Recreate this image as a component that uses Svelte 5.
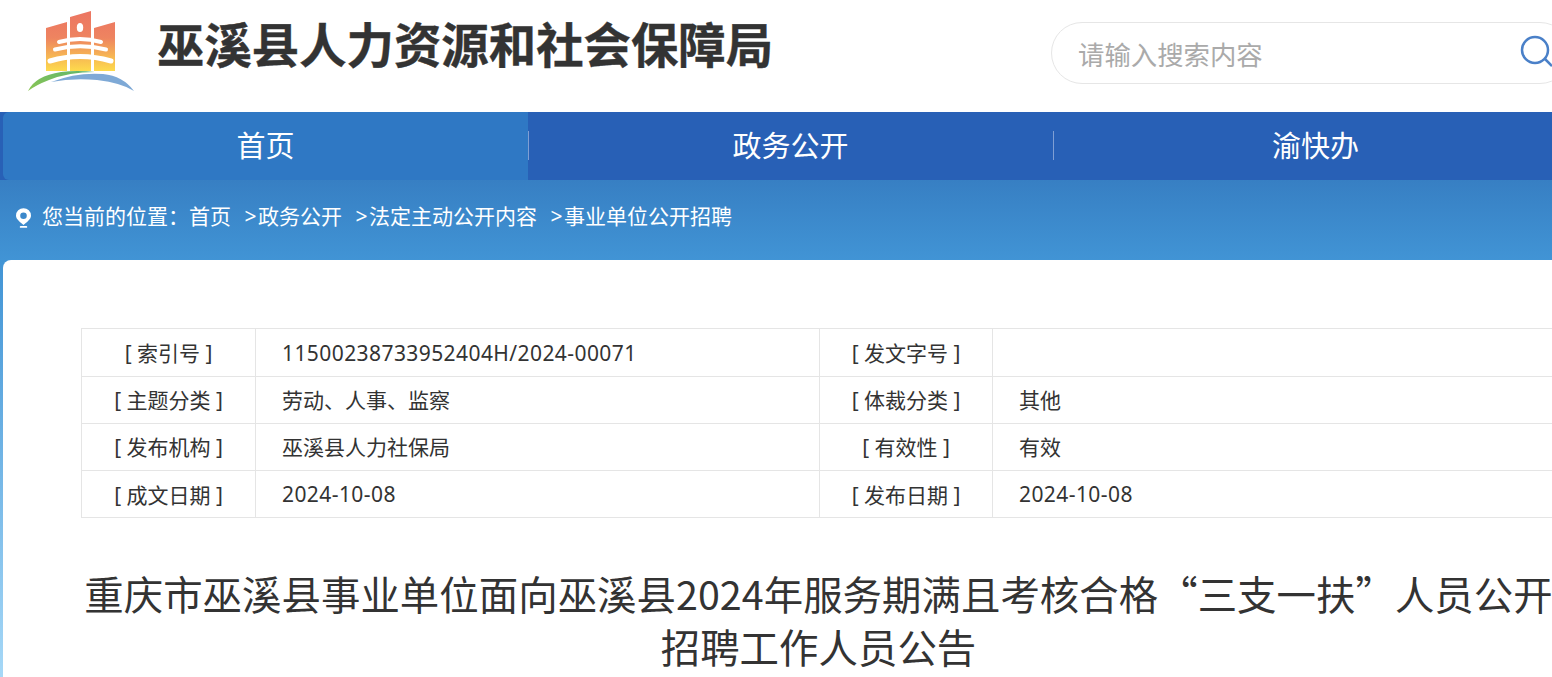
<script>
  const nav = ["首页", "政务公开", "渝快办"];
  const crumbs = ["政务公开", "法定主动公开内容", "事业单位公开招聘"];
  const rows = [
    ["索引号", "11500238733952404H/2024-00071", "发文字号", ""],
    ["主题分类", "劳动、人事、监察", "体裁分类", "其他"],
    ["发布机构", "巫溪县人力社保局", "有效性", "有效"],
    ["成文日期", "2024-10-08", "发布日期", "2024-10-08"]
  ];
  const isLatin = (s) => /^[\x00-\x7f]+$/.test(s);
</script>

<div class="page">
  <header class="top">
    <svg class="logo" width="108" height="82" viewBox="0 0 108 82">
      <defs>
        <linearGradient id="sky" gradientUnits="userSpaceOnUse" x1="0" y1="0" x2="0" y2="60">
          <stop offset="0" stop-color="#ec7562" />
          <stop offset="0.45" stop-color="#ee8460" />
          <stop offset="0.75" stop-color="#f6b554" />
          <stop offset="1" stop-color="#fedb4c" />
        </linearGradient>
        <linearGradient id="grass" x1="0" y1="1" x2="1" y2="0">
          <stop offset="0" stop-color="#8cc654" />
          <stop offset="1" stop-color="#5fb56c" />
        </linearGradient>
      </defs>
      <path d="M19 17 L40 11 V60 H19 Z M43 6 L64 0 V60 H43 Z M67 17 L88 11 V60 H67 Z" fill="url(#sky)" />
      <ellipse cx="53" cy="16.500" rx="3.200" ry="4.500" fill="#fff" />
      <g fill="none" stroke="#fff" stroke-linecap="round">
        <path d="M32 31 Q53 25 74 31" stroke-width="4" />
        <path d="M28 38.500 Q53 32 79 38.500" stroke-width="4" />
        <path d="M23 50 Q53 41 84 50" stroke-width="5" />
      </g>
      <path d="M1 80 Q8 65 34 61 Q50 59 68 61 Q42 61 22 69 Q9 74 1 80 Z" fill="url(#grass)" />
      <path d="M24 71 Q50 61 76 63 Q96 65 107 80 Q95 72 70 69 Q45 67 24 71 Z" fill="#7ea9d6" />
    </svg>
    <h1>巫溪县人力资源和社会保障局</h1>
    <div class="search">
      <input type="text" placeholder="请输入搜索内容" />
      <svg width="36" height="36" viewBox="0 0 36 36">
        <circle cx="16" cy="16" r="13" fill="none" stroke="#4a80c8" stroke-width="2.500" />
        <path d="M26 25 L33 32" fill="none" stroke="#4a80c8" stroke-width="2.500" />
      </svg>
    </div>
  </header>

  <nav class="nav">
    {#each nav as item, i}
      <a class="nav-item" class:active={i === 0} href="#top">{item}</a>
    {/each}
  </nav>

  <div class="body-bg">
    <div class="crumbs">
      <svg width="15" height="20" viewBox="0 0 16 21">
        <path fill-rule="evenodd" d="M8 0 A8 8 0 0 1 16 8 C16 12 11 15 8 18 C5 15 0 12 0 8 A8 8 0 0 1 8 0 Z M8 4.500 A3.500 3.500 0 1 0 8 11.500 A3.500 3.500 0 1 0 8 4.500 Z" fill="#fff" />
        <rect x="4" y="19" width="8" height="2" rx="1" fill="#fff" />
      </svg>
      <span>您当前的位置：</span>
      <span>首页</span>
      {#each crumbs as c}
        <span class="crumb"><span class="arrow">&gt;</span>{c}</span>
      {/each}
    </div>

    <main class="card">
      <table>
        <colgroup>
          <col class="c1" />
          <col class="c2" />
          <col class="c3" />
          <col class="c4" />
        </colgroup>
        <tbody>
          {#each rows as r}
            <tr>
              <th>[ {r[0]} ]</th>
              <td class:latin={isLatin(r[1])}>{r[1]}</td>
              <th>[ {r[2]} ]</th>
              <td class:latin={isLatin(r[3])}>{r[3]}</td>
            </tr>
          {/each}
        </tbody>
      </table>
      <h2>重庆市巫溪县事业单位面向巫溪县2024年服务期满且考核合格“三支一扶”人员公开招聘工作人员公告</h2>
    </main>
  </div>
</div>

<style>
  :global(html),
  :global(body) {
    margin: 0;
    overflow: hidden;
    height: 100%;
    background: #fff;
  }

  .page {
    width: 1552px;
    height: 677px;
    overflow: hidden;
    font-family: "Noto Sans", "Noto Sans CJK SC", sans-serif;
    color: #333;
  }

  .top {
    height: 112px;
    display: flex;
    align-items: center;
    width: 1640px;
    box-sizing: border-box;
    padding-left: 27px;
  }

  .logo {
    flex: none;
    margin-top: -8px;
  }

  h1 {
    margin: -22px 0 0 22px;
    font-size: 47.400px;
    line-height: 60px;
    font-weight: 700;
    color: #333;
    white-space: nowrap;
    width: 894px;
    -webkit-text-stroke: 0.4px #333;
  }

  .search {
    flex: none;
    width: 520px;
    height: 62px;
    box-sizing: border-box;
    border: 1px solid #e6e6e6;
    border-radius: 31px;
    margin-top: -6px;
    padding: 0 0 0 26px;
    display: flex;
    align-items: center;
  }

  .search input {
    width: 441px;
    border: 0;
    outline: 0;
    padding: 3px 0 0;
    font: inherit;
    font-size: 26.400px;
    color: #333;
    background: transparent;
  }

  .search input::placeholder {
    color: #aaa;
    opacity: 1;
  }

  .search svg {
    margin-top: -2px;
  }

  .nav {
    height: 68px;
    background: #2860b6;
    display: flex;
    padding-left: 3px;
    width: 1640px;
  }

  .nav-item {
    flex: none;
    width: 525px;
    box-sizing: border-box;
    color: #fff;
    text-decoration: none;
    font-size: 29px;
    line-height: 68px;
    height: 68px;
    text-align: center;
    position: relative;
  }

  .nav-item + .nav-item::before {
    content: "";
    position: absolute;
    left: 0;
    top: 19px;
    height: 29px;
    width: 1px;
    background: #7f9fd4;
  }

  .nav-item.active {
    background: #2f78c4;
    border-radius: 6px 0 0 6px;
  }

  .body-bg {
    height: 497px;
    background: linear-gradient(#377fc3 0, #4194d5 80px, #a6d8f7 497px);
  }

  .crumbs {
    height: 80px;
    box-sizing: border-box;
    padding: 0 0 10px 16px;
    display: flex;
    align-items: center;
    color: #fff;
    font-size: 21px;
    white-space: nowrap;
  }

  .crumbs svg {
    flex: none;
    margin: 6px 11px 0 0;
  }

  .crumb {
    margin-left: 13.500px;
  }

  .arrow {
    margin-right: 1.500px;
  }

  .card {
    margin-left: 3px;
    width: 1632px;
    height: 417px;
    box-sizing: border-box;
    background: #fff;
    border-radius: 8px 0 0 0;
    padding: 68px 0 0 78px;
  }

  table {
    width: 1475px;
    table-layout: fixed;
    border-collapse: collapse;
    font-size: 21px;
    color: #333;
  }

  .c1 {
    width: 174px;
  }

  .c2 {
    width: 564px;
  }

  .c3 {
    width: 173px;
  }

  .c4 {
    width: 564px;
  }

  th,
  td {
    height: 47px;
    padding: 0;
    box-sizing: border-box;
    border: 1px solid #e5e5e5;
    font-weight: 400;
  }

  tr:first-child th,
  tr:first-child td {
    height: 48px;
  }

  tr:not(:last-child) th,
  tr:not(:last-child) td:not(.latin) {
    padding-bottom: 2px;
  }

  th {
    text-align: center;
  }

  td {
    padding-left: 26px;
  }

  td.latin {
    letter-spacing: 0.420px;
  }

  h2 {
    margin: 48px 0 0;
    width: 1475px;
    font-family: "Noto Sans CJK SC", "Noto Sans", sans-serif;
    font-size: 39.400px;
    line-height: 53px;
    font-weight: 400;
    letter-spacing: 0.060px;
    text-align: center;
    color: #333;
  }
</style>
